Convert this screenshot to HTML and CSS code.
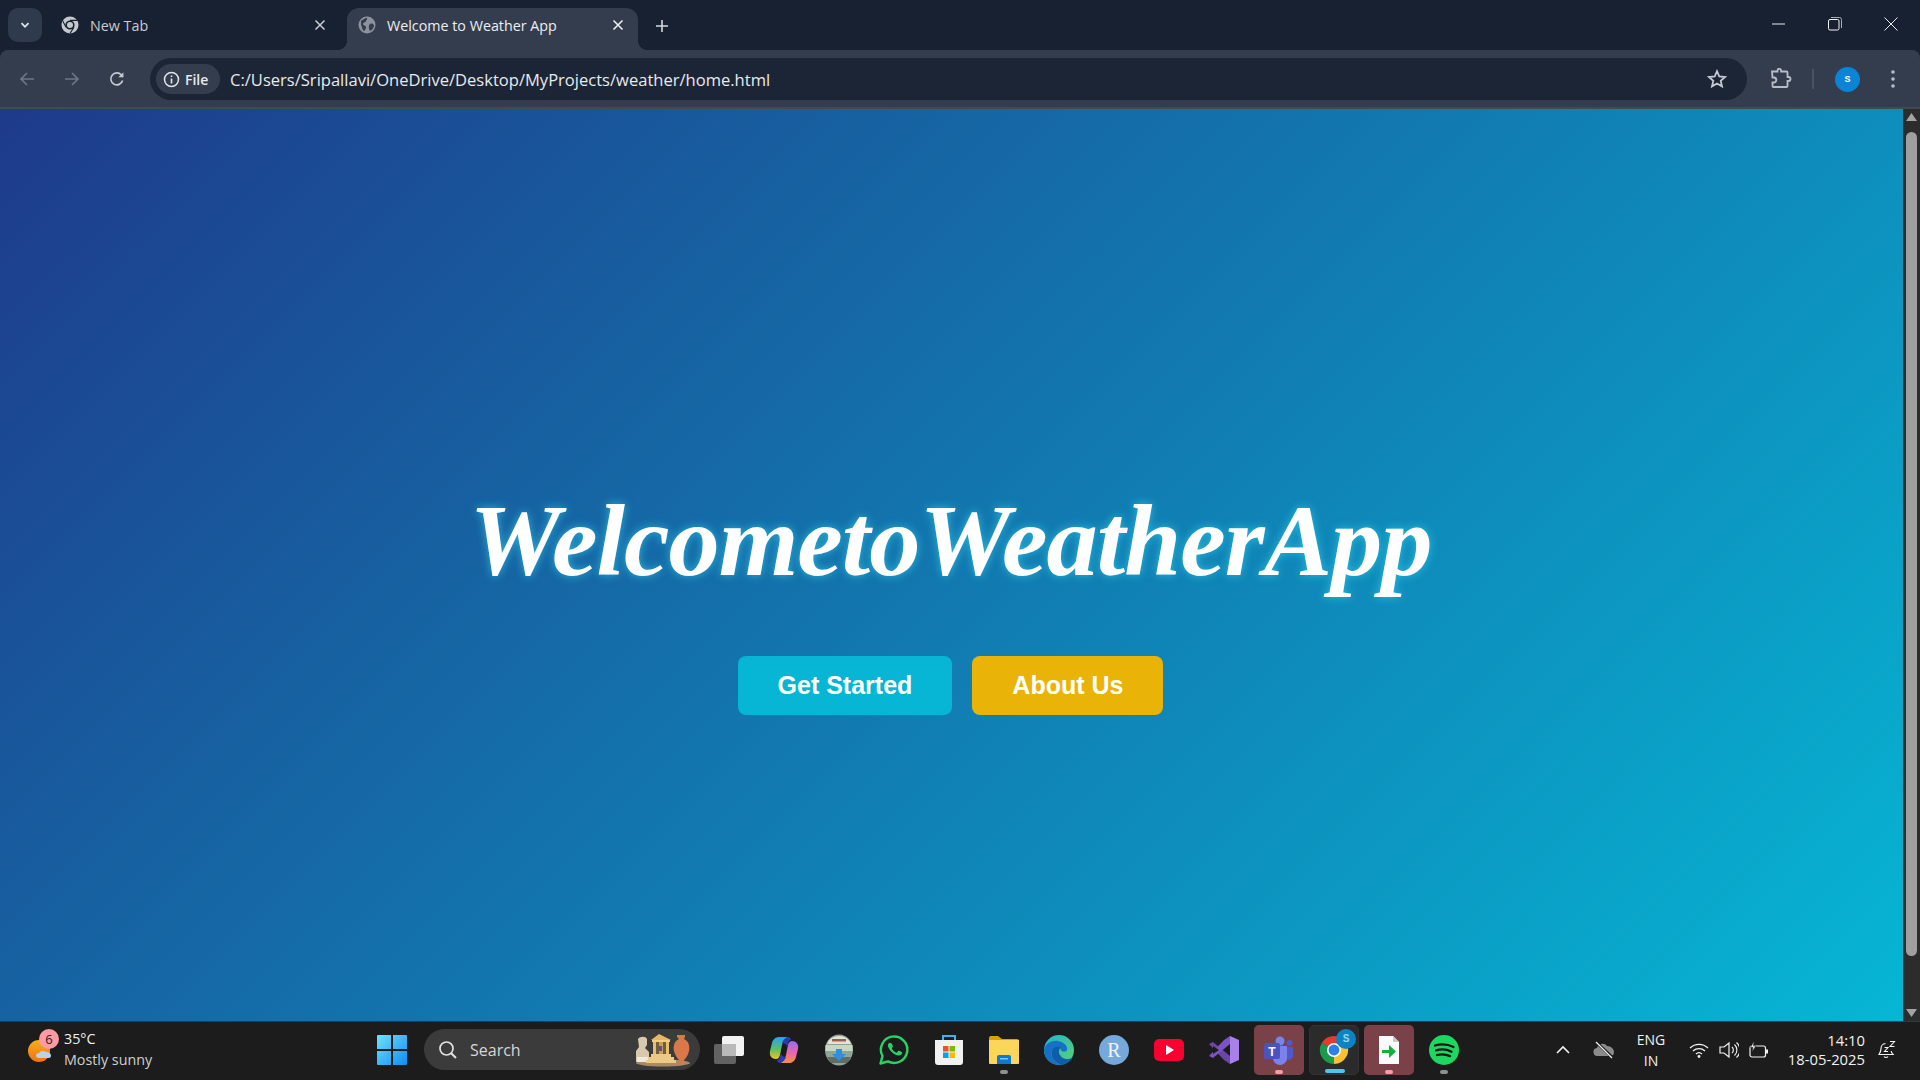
FILE: index.html
```html
<!DOCTYPE html>
<html>
<head>
	<title>Welcome to Weather App</title>
	<meta name="viewport" content="width=device-width">
	<link rel="stylesheet" href="styles.css">
</head>
<body>
	<!-- tabs -->
	<div class="tabstrip">
		<div class="tab-menu">
			<svg width="12" height="12" viewBox="0 0 12 12"><path d="M2.5 4.2 6 7.8l3.5-3.6" fill="none" stroke="#e3e6ea" stroke-width="1.8"/></svg>
		</div>
		<div class="tab tab-new">
			<svg class="favicon" width="18" height="18" viewBox="0 0 18 18"><circle cx="9" cy="9" r="8.5" fill="#c5c8cd"/><circle cx="9" cy="9" r="4.6" fill="#182132"/><circle cx="9" cy="9" r="3" fill="#c5c8cd"/><path d="M9 4.4h7M5 11.3 1.8 5M13 11.3 9 17.4" stroke="#182132" stroke-width="1.1"/></svg>
			<span class="tab-title">New Tab</span>
			<svg class="tab-x" width="12" height="12" viewBox="0 0 12 12"><path d="M1.5 1.5l9 9m0-9-9 9" stroke="#c9ccd1" stroke-width="1.5"/></svg>
		</div>
		<div class="tab tab-on">
			<svg class="favicon" width="18" height="18" viewBox="0 0 18 18"><circle cx="9" cy="9" r="8.5" fill="#8d939c"/><path d="M3 5c2-1 3-3 6-3 1 1-1 2-1 3 0 2-3 1-3 3s3 1 3 3-1 3-2 4C4 14 4 10 3 9zM12 8c2-1 3 0 4 1 0 3-2 5-4 6-1-2-2-5 0-7z" fill="#343d4e"/></svg>
			<span class="tab-title">Welcome to Weather App</span>
			<svg class="tab-x" width="12" height="12" viewBox="0 0 12 12"><path d="M1.5 1.5l9 9m0-9-9 9" stroke="#eceef0" stroke-width="1.6"/></svg>
		</div>
		<svg class="tab-plus" width="14" height="14" viewBox="0 0 14 14"><path d="M7 1v12M1 7h12" stroke="#d5d8dc" stroke-width="1.6"/></svg>
		<div class="win-btns">
			<svg width="14" height="14" viewBox="0 0 14 14"><path d="M0 7h13" stroke="#e8eaed" stroke-width="1"/></svg>
			<svg width="14" height="14" viewBox="0 0 14 14"><rect x=".5" y="2.5" width="10.5" height="10.5" rx="1.5" fill="none" stroke="#f2f3f5"/><path d="M3 .5h8.5a2 2 0 0 1 2 2V11" fill="none" stroke="#a9adb4"/></svg>
			<svg width="14" height="14" viewBox="0 0 14 14"><path d="M.5.5l13 13m0-13-13 13" stroke="#e8eaed" stroke-width="1"/></svg>
		</div>
	</div>

	<!-- address bar -->
	<div class="toolbar">
		<div class="nav-btns">
			<svg width="18" height="18" viewBox="0 0 18 18"><path d="M16 9H3m6-6L3 9l6 6" fill="none" stroke="#6f7683" stroke-width="1.7"/></svg>
			<svg width="18" height="18" viewBox="0 0 18 18"><path d="M2 9h13M9 3l6 6-6 6" fill="none" stroke="#6f7683" stroke-width="1.7"/></svg>
			<svg width="18" height="18" viewBox="0 0 18 18"><path d="M14.6 10.5A6 6 0 1 1 13.4 5L15 6.6" fill="none" stroke="#c5c9d0" stroke-width="1.7"/><path d="M15.4 2.2v5h-5z" fill="#c5c9d0"/></svg>
		</div>
		<div class="omnibox">
			<div class="file-chip">
				<svg width="17" height="17" viewBox="0 0 17 17"><circle cx="8.5" cy="8.5" r="7" fill="none" stroke="#e3e6ea" stroke-width="1.5"/><path d="M8.5 7.5v5M8.5 4.4v1.7" stroke="#e3e6ea" stroke-width="1.6"/></svg>
				<span>File</span>
			</div>
			<span class="url">C:/Users/Sripallavi/OneDrive/Desktop/MyProjects/weather/home.html</span>
			<svg class="star" width="20" height="20" viewBox="0 0 20 20"><path d="M10 2.2l2.3 5.3 5.7.5-4.3 3.8 1.3 5.6L10 14.5l-5 2.9 1.3-5.6L2 8l5.7-.5z" fill="none" stroke="#c5c9d0" stroke-width="1.8"/></svg>
		</div>
		<svg class="puzzle" width="22" height="22" viewBox="0 0 22 22"><path d="M2 3.5h5.5V2.6a1.8 1.8 0 0 1 3.6 0v.9h5.4a1 1 0 0 1 1 1V9h1a2 2 0 0 1 0 4h-1v5a1 1 0 0 1-1 1H3.500a1 1 0 0 1-1-1v-3.500h1.300a2.500 2.500 0 0 0 0-5H2.500z" fill="none" stroke="#b8bdc7" stroke-width="1.800"/></svg>
		<div class="bar-sep"></div>
		<div class="avatar">S</div>
		<svg class="dots" width="6" height="20" viewBox="0 0 6 20"><circle cx="3" cy="3" r="1.800" fill="#b8bdc7"/><circle cx="3" cy="10" r="1.800" fill="#b8bdc7"/><circle cx="3" cy="17" r="1.800" fill="#b8bdc7"/></svg>
	</div>

	<!-- page -->
	<div class="viewport">
		<div class="hero">
			<h1>WelcometoWeatherApp</h1>
			<div class="hero-btns">
				<a class="btn btn-start">Get Started</a>
				<a class="btn btn-about">About Us</a>
			</div>
		</div>
		<div class="scrollbar">
			<svg width="17" height="17" viewBox="0 0 17 17"><path d="M8.500 4 14 12H3z" fill="#a3a3a3"/></svg>
			<div class="thumb-track"><div class="thumb"></div></div>
			<svg width="17" height="17" viewBox="0 0 17 17"><path d="M8.500 13 3 5h11z" fill="#a3a3a3"/></svg>
		</div>
	</div>

	<!-- taskbar -->
	<div class="taskbar">
		<div class="weather">
			<div class="weather-icon">
				<svg width="34" height="34" viewBox="0 0 34 34"><defs><linearGradient id="sun" x1="0" y1="0" x2="0" y2="1"><stop offset="0" stop-color="#f2b01e"/><stop offset="1" stop-color="#f3720f"/></linearGradient></defs><circle cx="12" cy="19" r="11" fill="url(#sun)"/><path d="M12 26c-2 0-3-1-3-2.500s1.500-2.500 3-2.500c1-2 5-3 7-1 2 0 5 1 5 3.500S22 26 21 26z" fill="#b9d3ee"/></svg>
				<span class="weather-badge">6</span>
			</div>
			<div class="weather-text">
				<span class="temp">35°C</span>
				<span class="sky">Mostly sunny</span>
			</div>
		</div>

		<svg class="start" width="30" height="30" viewBox="0 0 30 30"><defs><linearGradient id="win" x1="0" y1="0" x2="1" y2="1"><stop offset="0" stop-color="#6fe2fb"/><stop offset="1" stop-color="#0f8cf2"/></linearGradient></defs><path d="M0 1a1 1 0 0 1 1-1h13v14H0zM16 0h13a1 1 0 0 1 1 1v13H16zM0 16h14v14H1a1 1 0 0 1-1-1zM16 16h14v13a1 1 0 0 1-1 1H16z" fill="url(#win)"/></svg>

		<div class="search">
			<svg width="20" height="20" viewBox="0 0 20 20"><circle cx="8.500" cy="8.500" r="6.500" fill="none" stroke="#e2e2e2" stroke-width="1.700"/><path d="M13.200 13.200 18 18" stroke="#e2e2e2" stroke-width="2"/></svg>
			<span>Search</span>
			<svg class="search-art" width="58" height="34" viewBox="0 0 58 34">
				<ellipse cx="30" cy="30" rx="27" ry="3.500" fill="#a98a63"/>
				<path d="M5 6c2-3 8-3 9 0l0 6-2 3 4 4v10H3V18l3-4z" fill="#d9c8ad"/>
				<path d="M4 24h12v5H4z" fill="#f0e8da"/>
				<path d="M26 1l12 6H18z" fill="#e6b765"/>
				<path d="M19 7h18v2H19z" fill="#f2cd84"/>
				<path d="M20 9h3v12h-3zM26 9h4v12h-4zM33 9h3v12h-3z" fill="#e8bd6e"/>
				<path d="M23 9h10v12H23z" fill="#a8813f" opacity=".5"/>
				<path d="M26 13h3v5h-3z" fill="#5a4bb0"/>
				<path d="M18 21h20v3H18zM15 24h26v3H15zM13 27h30v3H13z" fill="#ecc987"/>
				<path d="M44 2h8v2l-1 2c5 2 6 8 5 12-1 5-4 8-5 9v3h3v1H43v-1h3v-3c-2-2-4-5-5-9-1-4 0-10 5-12l-2-2z" fill="#d9794a"/>
			</svg>
		</div>

		<div class="apps">
			<!-- task view -->
			<div class="app">
				<svg width="32" height="30" viewBox="0 0 32 30"><rect x="9" y="1" width="22" height="20" rx="2" fill="#f2f2f2"/><rect x="1" y="9" width="22" height="20" rx="2" fill="#6a6a6a" opacity=".9"/><rect x="9" y="9" width="14" height="12" fill="#b9b9b9"/></svg>
			</div>
			<!-- copilot -->
			<div class="app">
				<svg width="30" height="30" viewBox="0 0 30 30"><defs><linearGradient id="cp1" x1="0" y1="0" x2="0" y2="1"><stop offset="0" stop-color="#2aa0f0"/><stop offset=".55" stop-color="#58c06a"/><stop offset="1" stop-color="#f5c21c"/></linearGradient><linearGradient id="cp2" x1="0" y1="0" x2="0" y2="1"><stop offset="0" stop-color="#9a6bea"/><stop offset=".55" stop-color="#e868b0"/><stop offset="1" stop-color="#f7913c"/></linearGradient></defs><path d="M10 2h9c-3 1-5 4-6 8l-2 10c-1 3-2 4-4 4-4 0-7-3-6-8l2-8c1-4 4-6 7-6z" fill="url(#cp1)"/><path d="M20 28h-9c3-1 5-4 6-8l2-10c1-3 2-4 4-4 4 0 7 3 6 8l-2 8c-1 4-4 6-7 6z" fill="url(#cp2)"/><path d="M19 2c2 0 3 2 3 3-2 0-3 2-3 4l-1 2c-1-2-3-3-5-3 1-3 3-5 6-6zM11 28c-2 0-3-2-3-3 2 0 3-2 3-4l1-2c1 2 3 3 5 3-1 3-3 5-6 6z" fill="#2b3ab0"/></svg>
			</div>
			<!-- app with round badge -->
			<div class="app">
				<svg width="30" height="32" viewBox="0 0 30 32"><ellipse cx="15" cy="16" rx="14" ry="15.500" fill="#8fa597"/><path d="M3 10a13 13 0 0 1 24 0z" fill="#e4e2d6"/><path d="M8 5h14v2.500H8z" fill="#a85a50"/><path d="M1.500 11h27v6h-27z" fill="#c6d8c4"/><path d="M3 23h24l-4 6H7z" fill="#5f6d66"/><path d="M12 15h6v5h4l-7 7-7-7h4z" fill="#2f8fe0"/></svg>
			</div>
			<!-- whatsapp -->
			<div class="app">
				<svg width="30" height="30" viewBox="0 0 30 30"><path d="M1.500 28.500l2-7.500A13.200 13.200 0 1 1 9 26.400z" fill="none" stroke="#25d366" stroke-width="2.400" stroke-linejoin="round"/><path d="M10.800 8.200c1-.6 1.600-.3 2 .5l1 2.200c.2.500 0 1-.8 1.900-.3.300-.2.600 0 1 1 1.700 2.300 2.900 4 3.700.4.200.7.200 1-.1l1.200-1.400c.3-.3.600-.4 1-.2l2.400 1.200c.5.200.6.600.4 1.300-.4 1.600-2.200 2.500-3.800 2.200-4.900-1-9-5-10.200-9.200-.4-1.500.3-2.900 1.800-3.800z" fill="#25d366"/></svg>
			</div>
			<!-- store -->
			<div class="app">
				<svg width="30" height="32" viewBox="0 0 30 32"><path d="M9 7V2h12v5" fill="none" stroke="#35b6f2" stroke-width="2"/><path d="M1 6h28v22a3 3 0 0 1-3 3H4a3 3 0 0 1-3-3z" fill="#f1f1f1"/><rect x="9" y="12" width="5.500" height="5.500" fill="#f25022"/><rect x="15.500" y="12" width="5.500" height="5.500" fill="#7fba00"/><rect x="9" y="18.500" width="5.500" height="5.500" fill="#00a4ef"/><rect x="15.500" y="18.500" width="5.500" height="5.500" fill="#ffb900"/></svg>
			</div>
			<!-- explorer -->
			<div class="app app-dot">
				<svg width="30" height="28" viewBox="0 0 30 28"><path d="M0 2a2 2 0 0 1 2-2h7l4 3h15a2 2 0 0 1 2 2v4H0z" fill="#d99f0d"/><path d="M0 4h30v23a1 1 0 0 1-1 1H1a1 1 0 0 1-1-1z" fill="#fbd65a"/><path d="M8 21a2 2 0 0 1 2-2h10a2 2 0 0 1 2 2v7H8z" fill="#0f78d0"/><path d="M11 22h8v1.500h-8z" fill="#7dc8f5"/></svg>
				<span class="run-dot"></span>
			</div>
			<!-- edge -->
			<div class="app">
				<svg width="30" height="30" viewBox="0 0 30 30"><defs><linearGradient id="edg" x1="0" y1="0" x2="1" y2="1"><stop offset="0" stop-color="#1fb5cf"/><stop offset="1" stop-color="#5bd46d"/></linearGradient></defs><circle cx="15" cy="15" r="15" fill="url(#edg)"/><path d="M0 15C1 9 7 5 14 6c6 1 10 5 9 9-1 2-5 2-6 0-1-4-7-3-9 1-2 5 2 12 10 14C8 31 0 24 0 15z" fill="#1670c8"/><path d="M8 16c-2 5 2 12 10 14 5-1 9-4 11-8-5 4-11 2-13-2-2-3-1-6 1-8-4-1-8 0-9 4z" fill="#0f5ca8"/></svg>
			</div>
			<!-- R -->
			<div class="app">
				<div class="r-icon">R</div>
			</div>
			<!-- youtube -->
			<div class="app">
				<svg width="30" height="22" viewBox="0 0 30 22"><rect width="30" height="22" rx="5" fill="#f8002f"/><path d="M12 6l8 5-8 5z" fill="#fff"/></svg>
			</div>
			<!-- visual studio -->
			<div class="app">
				<svg width="30" height="30" viewBox="0 0 30 30"><path d="M0 9l4-2 17 14v8l-6-4z" fill="#6a46a8"/><path d="M0 21l4 2L21 9V1l-6 4z" fill="#7c52c4"/><path d="M21 1l9 4v20l-9 4z" fill="#a97fe8"/><path d="M4 11l6 4-6 4z" fill="#1c1c1c"/></svg>
			</div>
			<!-- teams -->
			<div class="app app-hl">
				<svg width="30" height="30" viewBox="0 0 30 30"><circle cx="16" cy="6" r="4.500" fill="#7b83eb"/><circle cx="25.500" cy="8" r="3" fill="#5059c9"/><path d="M21 12h8v9a5 5 0 0 1-8 3z" fill="#5059c9"/><path d="M9 11h14v12a7 7 0 0 1-14 0z" fill="#7b83eb"/><rect x="0" y="8" width="16" height="16" rx="2" fill="#4b53bc"/><text class="teams-t" x="8" y="20.500">T</text></svg>
				<span class="run-dot dot-pink"></span>
			</div>
			<!-- chrome -->
			<div class="app app-act">
				<svg width="30" height="30" viewBox="0 0 32 32"><path d="M16 16 3 8.500A15 15 0 0 1 29 8.500z" fill="#e33b2e"/><path d="M16 16 3 8.500A15 15 0 0 0 16 31z" fill="#1c9a4b"/><path d="M16 16 29 8.500A15 15 0 0 1 16 31z" fill="#fbc02d"/><circle cx="16" cy="16" r="7.500" fill="#fff"/><circle cx="16" cy="16" r="5.800" fill="#2f7fe8"/></svg>
				<span class="chrome-badge">S</span>
				<span class="run-dot dot-blue"></span>
			</div>
			<!-- file -->
			<div class="app app-hl">
				<svg width="22" height="28" viewBox="0 0 22 28"><path d="M1 0h14l6 6v22H1z" fill="#fbfbfb"/><path d="M15 0l6 6h-6z" fill="#c9c9c9"/><path d="M4 14h7V9l7 6.500-7 6.500v-5H4z" fill="#12b13d"/></svg>
				<span class="run-dot dot-pink"></span>
			</div>
			<!-- spotify -->
			<div class="app app-dot">
				<svg width="30" height="30" viewBox="0 0 30 30"><circle cx="15" cy="15" r="15" fill="#1ed760"/><path d="M6 10.500c6-1.700 13-1.200 18.500 1.500M7 15.300c5-1.400 11-1 15.500 1.400M8 20c4.500-1.100 9-.7 13 1.100" fill="none" stroke="#141414" stroke-width="2.300" stroke-linecap="round"/></svg>
				<span class="run-dot"></span>
			</div>
		</div>

		<div class="tray">
			<svg class="tray-chev" width="14" height="9" viewBox="0 0 14 9"><path d="M1 8l6-6 6 6" fill="none" stroke="#f2f2f2" stroke-width="1.600"/></svg>
			<svg class="tray-cloud" width="22" height="18" viewBox="0 0 22 18"><path d="M5 15a4 4 0 0 1-1-8c1-4 7-6 10-2 4 0 7 3 7 6s-2 4-4 4z" fill="#8b8b8b"/><path d="M3 1l17 16" stroke="#1c1c1c" stroke-width="3"/><path d="M3 1l16 16" stroke="#eee" stroke-width="1.200"/></svg>
			<div class="lang"><span>ENG</span><span>IN</span></div>
			<svg class="tray-wifi" width="20" height="16" viewBox="0 0 20 16"><path d="M1 6a13 13 0 0 1 18 0M4 9a9 9 0 0 1 12 0M7 12a4.500 4.500 0 0 1 6 0" fill="none" stroke="#f2f2f2" stroke-width="1.300"/><circle cx="10" cy="14.500" r="1.400" fill="#f2f2f2"/></svg>
			<svg class="tray-vol" width="20" height="18" viewBox="0 0 20 18"><path d="M1 6h4l5-4v14l-5-4H1z" fill="none" stroke="#f2f2f2" stroke-width="1.200"/><path d="M13 6a4 4 0 0 1 0 6M15.500 3.500a7.500 7.500 0 0 1 0 11M17.500 1.500a10 10 0 0 1 0 15" fill="none" stroke="#f2f2f2" stroke-width="1.100"/></svg>
			<svg class="tray-batt" width="20" height="18" viewBox="0 0 20 18"><rect x="1" y="5" width="15.500" height="11" rx="2" fill="none" stroke="#f2f2f2" stroke-width="1.200"/><path d="M17 8.500h2v4h-2z" fill="#f2f2f2"/><path d="M5 0 1.500 6.500h2.500L3 11l4-6H4.500z" fill="#f2f2f2" stroke="#1c1c1c" stroke-width=".6"/></svg>
			<div class="clock"><span>14:10</span><span>18-05-2025</span></div>
			<svg class="tray-bell" width="18" height="20" viewBox="0 0 18 20"><path d="M7.500 3.500A5 5 0 0 0 3 8.500c0 3-1 4.500-2 6h14c-1-1-1.500-2-1.800-3.500M6 16.500a2.500 2.500 0 0 0 4 0" fill="none" stroke="#f2f2f2" stroke-width="1.200"/><path d="M6.500 7.500h3.500l-3.500 4H10M12 1.500h4.500l-4.500 5h4.500" fill="none" stroke="#f2f2f2" stroke-width="1.100"/></svg>
		</div>
	</div>
</body>
</html>
```

FILE: styles.css
```css
*{
	margin: 0;
	padding: 0;
	box-sizing: border-box;
}
html,body{
	height: 100%;
	overflow: hidden;
}
body{
	display: flex;
	flex-direction: column;
	background: #182132;
	font-family: "Open Sans", "Noto Sans", sans-serif;
}
svg{
	display: block;
	flex-shrink: 0;
}

/* tabs */
.tabstrip{
	height: 50px;
	flex-shrink: 0;
	display: flex;
	align-items: flex-end;
	background: #182132;
	padding-left: 8px;
}
.tab-menu{
	width: 34px;
	height: 34px;
	margin-bottom: 8px;
	border-radius: 10px;
	background: #2f3a4c;
	display: flex;
	align-items: center;
	justify-content: center;
}
.tab{
	position: relative;
	height: 42px;
	width: 291px;
	padding: 0 14px 8px 11px;
	display: flex;
	align-items: center;
	border-radius: 12px 12px 0 0;
	color: #c9ccd1;
	font-size: 14.300px;
}
.tab-new{
	margin: 0 6px 0 8px;
	padding-right: 15px;
}
.tab-on{
	background: #343d4e;
	color: #eceef0;
}
/* little curves where the active tab meets the bar */
.tab-on::before,
.tab-on::after{
	content: "";
	position: absolute;
	bottom: 0;
	width: 10px;
	height: 10px;
}
.tab-on::before{
	left: -10px;
	background: radial-gradient(circle at 0 0, transparent 10px, #343d4e 10.500px);
}
.tab-on::after{
	right: -10px;
	background: radial-gradient(circle at 100% 0, transparent 10px, #343d4e 10.500px);
}
.favicon{
	margin-right: 11px;
}
.tab-title{
	flex: 1;
	white-space: nowrap;
}
.tab-plus{
	margin: 0 0 17px 17px;
}
.win-btns{
	margin-left: auto;
	height: 50px;
	display: flex;
	align-items: center;
	gap: 42px;
	padding: 0 22px 2px 0;
}

/* address bar */
.toolbar{
	height: 59px;
	flex-shrink: 0;
	display: flex;
	align-items: center;
	padding-top: 1px;
	background: #343d4e;
	border-bottom: 2px solid #3f4a55;
	border-radius: 8px 8px 0 0;
}
.nav-btns{
	display: flex;
	gap: 27px;
	padding-left: 18px;
	width: 150px;
}
.omnibox{
	width: 1597px;
	height: 42px;
	display: flex;
	align-items: center;
	padding: 0 20px 0 6px;
	border-radius: 21px;
	background: #1c2535;
}
.file-chip{
	height: 30px;
	width: 64px;
	display: flex;
	align-items: center;
	gap: 5px;
	padding-left: 7px;
	border-radius: 15px;
	background: #343d4e;
	color: #e8eaed;
	font-size: 14px;
	font-weight: 600;
}
.url{
	flex: 1;
	padding-left: 10px;
	color: #e8eaed;
	font-size: 16.560px;
	white-space: nowrap;
}
.puzzle{
	margin-left: 23px;
}
.bar-sep{
	width: 2px;
	height: 20px;
	margin-left: 20px;
	background: #4a5363;
}
.avatar{
	width: 25px;
	height: 25px;
	margin-left: 21px;
	border-radius: 50%;
	background: #0b84d6;
	color: #fff;
	font: 700 9px/25px "Liberation Sans", sans-serif;
	text-align: center;
}
.dots{
	margin-left: 30px;
}

/* page */
.viewport{
	flex: 1;
	min-height: 0;
	display: flex;
}
.hero{
	flex: 1;
	padding: 66px 2px 0 0;
	display: flex;
	flex-direction: column;
	align-items: center;
	justify-content: center;
	background: linear-gradient(135deg, #1e3a8a, #06b6d4);
}
h1{
	font-family: "Liberation Serif", serif;
	font-style: italic;
	font-weight: 700;
	font-size: 102.500px;
	line-height: 120px;
	letter-spacing: -1px;
	color: #fff;
	text-shadow: 0 0 10px rgba(56, 213, 240, .7);
	margin-bottom: 55px;
}
.hero-btns{
	display: flex;
	gap: 20px;
}
.btn{
	padding: 16px 40px;
	border-radius: 8px;
	color: #fff;
	font: 700 25px/27px "Liberation Sans", sans-serif;
}
.btn-start{
	background: #06b6d4;
}
.btn-about{
	background: #eab308;
}
.scrollbar{
	width: 17px;
	flex-shrink: 0;
	display: flex;
	flex-direction: column;
	background: #2c2c2c;
}
.thumb-track{
	flex: 1;
	padding: 6px 3px 48px;
}
.thumb{
	height: 100%;
	border-radius: 6px;
	background: #9f9f9f;
}

/* taskbar */
.taskbar{
	height: 59px;
	flex-shrink: 0;
	display: flex;
	align-items: center;
	padding-bottom: 3px;
	background: #1c1c1c;
	border-top: 1px solid #34393e;
	color: #f2f2f2;
}
.weather{
	width: 377px;
	padding: 0 0 1px 27px;
	display: flex;
	align-items: center;
}
.weather-icon{
	position: relative;
	width: 37px;
	height: 34px;
}
.weather-badge{
	position: absolute;
	left: 12px;
	top: -3px;
	width: 20px;
	height: 20px;
	border-radius: 50%;
	background: #ff9aa2;
	color: #1c1c1c;
	font-size: 13px;
	line-height: 20px;
	text-align: center;
}
.weather-text{
	display: flex;
	flex-direction: column;
	font-size: 14.300px;
	line-height: 21px;
}
.sky{
	color: #cfcfcf;
}
.start{
	margin-right: 17px;
}
.search{
	position: relative;
	width: 276px;
	height: 41px;
	display: flex;
	align-items: center;
	gap: 12px;
	padding-left: 14px;
	border-radius: 21px;
	background: #3b3b3b;
	color: #d6d6d6;
	font-size: 16px;
}
.search-art{
	position: absolute;
	right: 9px;
	top: 4px;
}
.apps{
	display: flex;
	gap: 5px;
	margin-left: 4px;
}
.app{
	position: relative;
	width: 50px;
	height: 50px;
	display: flex;
	align-items: center;
	justify-content: center;
	border-radius: 5px;
}
.app-hl{
	background: #7a4248;
}
.app-act{
	background: #2b2b2b;
	border: 1px solid #333;
}
.run-dot{
	position: absolute;
	left: 21px;
	bottom: 1px;
	width: 8px;
	height: 4px;
	border-radius: 2px;
	background: #8f8f8f;
}
.dot-pink{
	background: #ff9aa2;
}
.dot-blue{
	left: 15px;
	width: 20px;
	background: #4fc3f7;
}
.r-icon{
	width: 30px;
	height: 30px;
	border-radius: 50%;
	background: #75a9dc;
	color: #f2f2f2;
	font: 20px/30px "Liberation Serif", serif;
	text-align: center;
}
.teams-t{
	fill: #fff;
	font: 700 12px "Liberation Sans", sans-serif;
	text-anchor: middle;
}
.chrome-badge{
	position: absolute;
	left: 26px;
	top: 3px;
	width: 20px;
	height: 20px;
	border-radius: 50%;
	background: #0b84c6;
	color: #9bd4f2;
	font: 700 10px/20px "Liberation Sans", sans-serif;
	text-align: center;
}
.tray{
	flex: 1;
	display: flex;
	align-items: center;
	padding-left: 87px;
}
.tray-cloud{
	margin-left: 23px;
}
.lang{
	width: 52px;
	margin-left: 10px;
	display: flex;
	flex-direction: column;
	align-items: center;
	font-size: 14px;
	line-height: 21px;
}
.tray-wifi{
	margin-left: 12px;
}
.tray-vol{
	margin-left: 10px;
}
.tray-batt{
	margin-left: 10px;
}
.clock{
	width: 96px;
	display: flex;
	flex-direction: column;
	align-items: flex-end;
	font-size: 14.800px;
	line-height: 19px;
}
.tray-bell{
	margin-left: 13px;
}
```
